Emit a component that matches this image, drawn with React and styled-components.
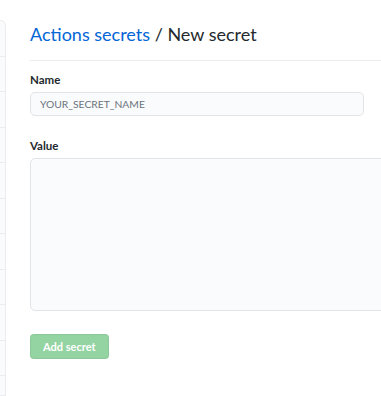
import React from "react";
import styled, { createGlobalStyle } from "styled-components";

const GlobalStyle = createGlobalStyle`
  body {
    margin: 0;
    background: #fff;
    font-family: Lato, "Noto Sans", sans-serif;
    color: #24292e;
  }
`;

const Page = styled.div`
  display: flex;
  width: 381px;
  height: 396px;
  overflow: hidden;
`;

const SideMenu = styled.nav`
  flex: 0 0 5px;
  margin-top: 20px;
  background: #fafbfc;
  border: 1px solid #eaecef;
  border-left: none;
  border-radius: 0 6px 0 0;
  display: flex;
  flex-direction: column;
`;

const SideItem = styled.div`
  height: 34.5px;
  flex-shrink: 0;
  border-top: 1px solid #eaecef;
  &:first-child {
    border-top: none;
  }
`;

const Main = styled.main`
  flex: 1;
  min-width: 0;
  padding: 22px 0 0 24px;
`;

const Subhead = styled.div`
  display: flex;
  padding-bottom: 14px;
  margin-bottom: 11px;
  border-bottom: 1px solid #eaecef;
`;

const Heading = styled.h2`
  margin: 0;
  font-size: 18px;
  font-weight: 400;
  line-height: 24px;
  white-space: nowrap;
  a {
    color: #0366d6;
    text-decoration: none;
  }
`;

const Field = styled.div`
  margin-bottom: ${(p) => p.gap}px;
`;

const Label = styled.label`
  display: block;
  font-size: 11.5px;
  font-weight: 700;
  line-height: 16px;
  margin-bottom: 4px;
`;

const Input = styled.input`
  display: block;
  box-sizing: border-box;
  width: 334px;
  height: 24px;
  padding: 0 9px;
  font-family: inherit;
  font-size: 10.3px;
  background: #fafbfc;
  border: 1px solid #e1e4e8;
  border-radius: 5px;
  outline: none;
  &::placeholder {
    color: #6a737d;
  }
`;

const TextArea = styled.textarea`
  display: block;
  box-sizing: border-box;
  width: 440px;
  height: 153px;
  font-family: inherit;
  background: #fafbfc;
  border: 1px solid #e1e4e8;
  border-radius: 5px;
  resize: none;
  outline: none;
`;

const Button = styled.button`
  box-sizing: border-box;
  height: 25px;
  padding: 0 12px;
  font-family: inherit;
  font-size: 11px;
  font-weight: 700;
  color: #ffffff;
  background: #94d3a2;
  border: 1px solid rgba(27, 31, 35, 0.06);
  border-radius: 4px;
`;

export default function App() {
  return (
    <Page>
      <GlobalStyle />
      <SideMenu>
        {Array.from({ length: 12 }).map((_, i) => (
          <SideItem key={i} />
        ))}
      </SideMenu>
      <Main>
        <Subhead>
          <Heading>
            <a href="#">Actions secrets</a> / New secret
          </Heading>
        </Subhead>
        <Field gap={22}>
          <Label>Name</Label>
          <Input placeholder="YOUR_SECRET_NAME" />
        </Field>
        <Field gap={23}>
          <Label>Value</Label>
          <TextArea />
        </Field>
        <Button disabled>Add secret</Button>
      </Main>
    </Page>
  );
}
